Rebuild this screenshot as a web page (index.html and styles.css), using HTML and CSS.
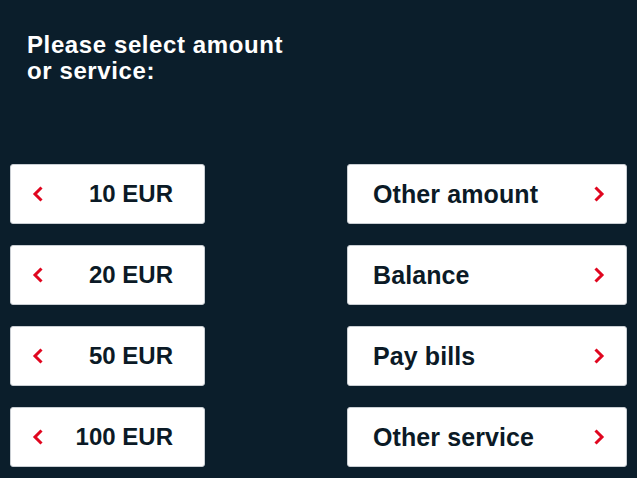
FILE: index.html
```html
<!DOCTYPE html>
<html>
<head>
<meta charset="utf-8">
<link rel="stylesheet" href="styles.css">
</head>
<body>
<div class="screen">
  <h1 class="title">Please select amount<br>or service:</h1>
  <div class="grid">
    <div class="col left">
      <div class="btn btn-left"><svg class="chev" width="12" height="16" viewBox="0 0 12 16"><path d="M9.5 1.5 L3 8 L9.5 14.5" fill="none" stroke="#e0061f" stroke-width="3"/></svg><span>10 EUR</span></div>
      <div class="btn btn-left"><svg class="chev" width="12" height="16" viewBox="0 0 12 16"><path d="M9.5 1.5 L3 8 L9.5 14.5" fill="none" stroke="#e0061f" stroke-width="3"/></svg><span>20 EUR</span></div>
      <div class="btn btn-left"><svg class="chev" width="12" height="16" viewBox="0 0 12 16"><path d="M9.5 1.5 L3 8 L9.5 14.5" fill="none" stroke="#e0061f" stroke-width="3"/></svg><span>50 EUR</span></div>
      <div class="btn btn-left"><svg class="chev" width="12" height="16" viewBox="0 0 12 16"><path d="M9.5 1.5 L3 8 L9.5 14.5" fill="none" stroke="#e0061f" stroke-width="3"/></svg><span>100 EUR</span></div>
    </div>
    <div class="col right">
      <div class="btn btn-right"><span class="label">Other amount</span><svg class="chev" width="12" height="16" viewBox="0 0 12 16"><path d="M2.5 1.5 L9 8 L2.5 14.5" fill="none" stroke="#e0061f" stroke-width="3"/></svg></div>
      <div class="btn btn-right"><span class="label">Balance</span><svg class="chev" width="12" height="16" viewBox="0 0 12 16"><path d="M2.5 1.5 L9 8 L2.5 14.5" fill="none" stroke="#e0061f" stroke-width="3"/></svg></div>
      <div class="btn btn-right"><span class="label">Pay bills</span><svg class="chev" width="12" height="16" viewBox="0 0 12 16"><path d="M2.5 1.5 L9 8 L2.5 14.5" fill="none" stroke="#e0061f" stroke-width="3"/></svg></div>
      <div class="btn btn-right"><span class="label">Other service</span><svg class="chev" width="12" height="16" viewBox="0 0 12 16"><path d="M2.5 1.5 L9 8 L2.5 14.5" fill="none" stroke="#e0061f" stroke-width="3"/></svg></div>
    </div>
  </div>
</div>
</body>
</html>
```

FILE: styles.css
```css
html, body {
  margin: 0;
  padding: 0;
  background: #0b1e2b;
}
.screen {
  width: 637px;
  height: 478px;
  overflow: hidden;
  font-family: "Liberation Sans", Arial, sans-serif;
  box-sizing: border-box;
  padding: 32px 10px 0 10px;
}
.title {
  margin: 0 0 0 17px;
  color: #ffffff;
  font-size: 24px;
  letter-spacing: 0.6px;
  line-height: 26px;
  font-weight: bold;
}
.grid {
  margin-top: 80px;
  display: flex;
  justify-content: space-between;
}
.col {
  display: flex;
  flex-direction: column;
  gap: 21px;
}
.left { width: 195px; }
.right { width: 280px; }
.btn {
  height: 60px;
  box-sizing: border-box;
  background: #ffffff;
  border: 1px solid #c9ced3;
  border-radius: 3px;
  display: flex;
  align-items: center;
  color: #0b1a26;
  font-size: 24px;
  font-weight: bold;
}
.btn-left {
  padding: 0 31px 0 21px;
  justify-content: space-between;
}
.btn-right {
  padding: 0 21px 0 25px;
  justify-content: space-between;
}
.label {
  font-size: 25px;
  letter-spacing: 0.1px;
}
.chev { display: block; }
```
